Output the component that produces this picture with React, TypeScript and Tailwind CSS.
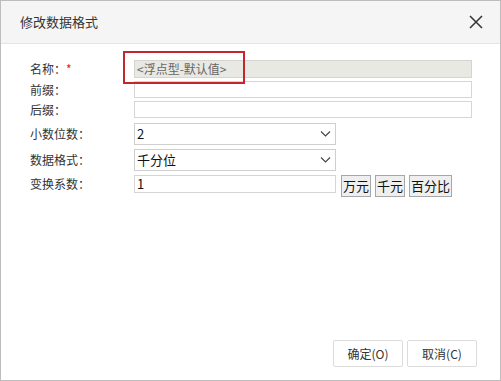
import React from "react";

const font = { fontFamily: '"Microsoft YaHei", "Noto Sans CJK SC", sans-serif' };

function Chevron() {
  return (
    <svg width="11" height="7" viewBox="0 0 11 7" className="absolute right-[4px] top-1/2 -translate-y-1/2">
      <path d="M1 1 L5.5 5.5 L10 1" fill="none" stroke="#444" strokeWidth="1.1" />
    </svg>
  );
}

function Label({ text, star }: { text: string; star?: boolean }) {
  return (
    <div className="w-[104px] shrink-0 text-[12px] text-[#333] leading-none">
      {text}
      {star && <span className="text-[#e02020]">*</span>}
    </div>
  );
}

export default function App() {
  return (
    <div
      className="relative w-[501px] h-[381px] bg-white border border-[#bdbdbd] flex flex-col"
      style={font}
    >
      {/* header */}
      <div className="h-[43px] bg-[#f5f5f5] border-b border-[#e4e4e4] flex items-center justify-between pl-[19px] pr-[17px] shrink-0">
        <span className="text-[13px] text-[#333]">修改数据格式</span>
        <svg width="14" height="14" viewBox="0 0 14 14">
          <path d="M1 1 L13 13 M13 1 L1 13" stroke="#333" strokeWidth="1.5" />
        </svg>
      </div>

      {/* form */}
      <div className="flex flex-col pl-[29px] pt-[16px]">
        <div className="flex items-center h-[18px]">
          <Label text="名称：" star />
          <div className="w-[338px] h-[18px] bg-[#e9e9e4] border border-[#d4d4d0] text-[12px] text-[#666] leading-[16px] pl-[2px]">
            &lt;浮点型-默认值&gt;
          </div>
        </div>
        <div className="flex items-center h-[17px] mt-[3px]">
          <Label text="前缀：" />
          <div className="w-[338px] h-[17px] bg-white border border-[#d6d6d6]" />
        </div>
        <div className="flex items-center h-[17px] mt-[3px]">
          <Label text="后缀：" />
          <div className="w-[338px] h-[17px] bg-white border border-[#d6d6d6]" />
        </div>
        <div className="flex items-center h-[22px] mt-[5px]">
          <Label text="小数位数：" />
          <div className="relative w-[202px] h-[22px] border border-[#cfcfcf] text-[13px] text-[#111] leading-[20px] pl-[2px]">
            2
            <Chevron />
          </div>
        </div>
        <div className="flex items-center h-[22px] mt-[4px]">
          <Label text="数据格式：" />
          <div className="relative w-[202px] h-[22px] border border-[#cfcfcf] text-[13px] text-[#111] leading-[20px] pl-[2px]">
            千分位
            <Chevron />
          </div>
        </div>
        <div className="flex items-start h-[22px] mt-[4px]">
          <div className="h-[18px] flex items-center">
            <Label text="变换系数：" />
          </div>
          <div className="w-[202px] h-[18px] border border-[#d6d6d6] text-[13px] text-[#111] leading-[16px] pl-[2px]">
            1
          </div>
          <div className="flex gap-[4px] ml-[5px]">
            {["万元", "千元", "百分比"].map((t) => (
              <div
                key={t}
                className="h-[22px] px-[1px] bg-[#efefef] border border-[#a7a7a7] text-[13px] text-[#111] leading-[20px] flex items-center"
              >
                {t}
              </div>
            ))}
          </div>
        </div>
      </div>

      {/* footer */}
      <div className="mt-auto flex justify-end gap-[4px] pr-[23px] pb-[13px]">
        <div className="w-[70px] h-[27px] border border-[#dcdcdc] rounded-[2px] flex items-center justify-center text-[12px] text-[#333]">
          确定(O)
        </div>
        <div className="w-[70px] h-[27px] border border-[#dcdcdc] rounded-[2px] flex items-center justify-center text-[12px] text-[#333]">
          取消(C)
        </div>
      </div>

      {/* highlight box */}
      <div className="absolute left-[122px] top-[50px] w-[122px] h-[33px] border-2 border-[#c4262e]" />
    </div>
  );
}
